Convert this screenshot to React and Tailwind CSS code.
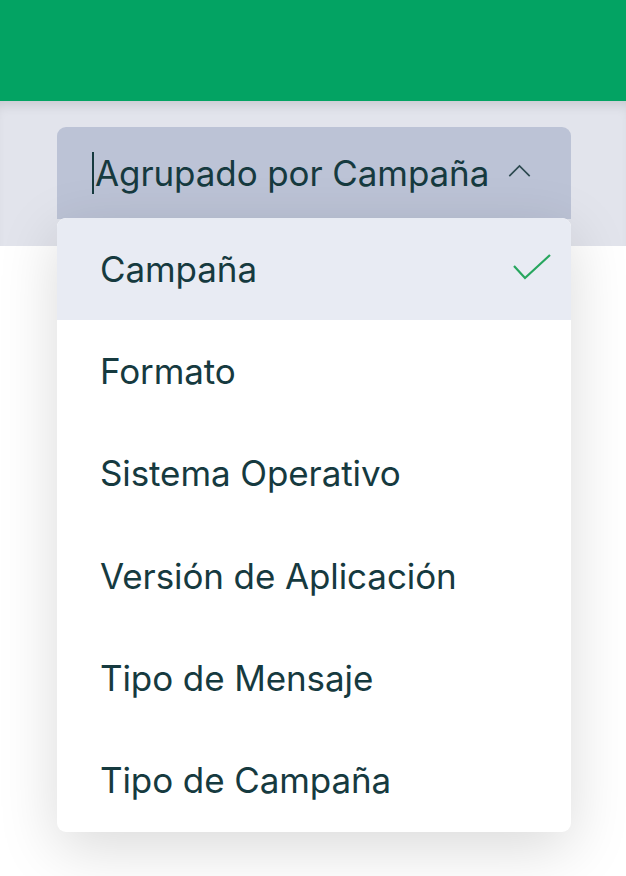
import { useState } from "react";

const options = [
  "Campaña",
  "Formato",
  "Sistema Operativo",
  "Versión de Aplicación",
  "Tipo de Mensaje",
  "Tipo de Campaña",
];

const App = () => {
  const [selected, setSelected] = useState("Campaña");

  return (
    <div
      className="relative w-[626px] h-[876px] overflow-hidden bg-white"
      style={{ fontFamily: "Inter, 'Noto Sans', sans-serif" }}
    >
      {/* Header */}
      <div className="h-[101px] bg-[#03a363]" />

      {/* Toolbar band */}
      <div className="h-[145px] bg-[#e2e4ec] shadow-[inset_0_10px_12px_-6px_rgba(0,0,0,0.12)] px-[57px] pt-[26px]">
        <div className="w-[514px] h-[92px] rounded-t-[9px] bg-[#bcc3d6] flex items-center pl-[35px] pr-[40px] text-[#163a3f]">
          <span className="w-[2px] h-[42px] bg-[#163a3f] mr-[1px]" />
          <span className="text-[35px] tracking-[-0.1px]">Agrupado por {selected}</span>
          <svg
            viewBox="0 0 24 14"
            className="ml-auto -mt-[5px] w-[23px] h-[13px]"
            fill="none"
            stroke="#2d4a50"
            strokeWidth="1.8"
          >
            <path d="M1 13 L12 2 L23 13" />
          </svg>
        </div>
      </div>

      {/* Dropdown menu */}
      <div className="absolute left-[57px] top-[218px] w-[514px] rounded-[9px] bg-white shadow-[0_16px_60px_rgba(0,0,0,0.15)] overflow-hidden">
        <ul>
          {options.map((opt) => (
            <li
              key={opt}
              onClick={() => setSelected(opt)}
              className={`h-[102.3px] flex items-center pl-[43px] pr-[20px] text-[35px] tracking-[-0.1px] text-[#163a3f] cursor-pointer ${
                opt === selected ? "bg-[#e8ebf3]" : ""
              }`}
            >
              {opt}
              {opt === selected && (
                <svg
                  viewBox="0 0 38 26"
                  className="ml-auto -mt-[4px] w-[38px] h-[26px]"
                  fill="none"
                  stroke="#27a65e"
                  strokeWidth="2.2"
                >
                  <path d="M1 12 L12 24 L37 1" />
                </svg>
              )}
            </li>
          ))}
        </ul>
      </div>
    </div>
  );
};

export default App;
